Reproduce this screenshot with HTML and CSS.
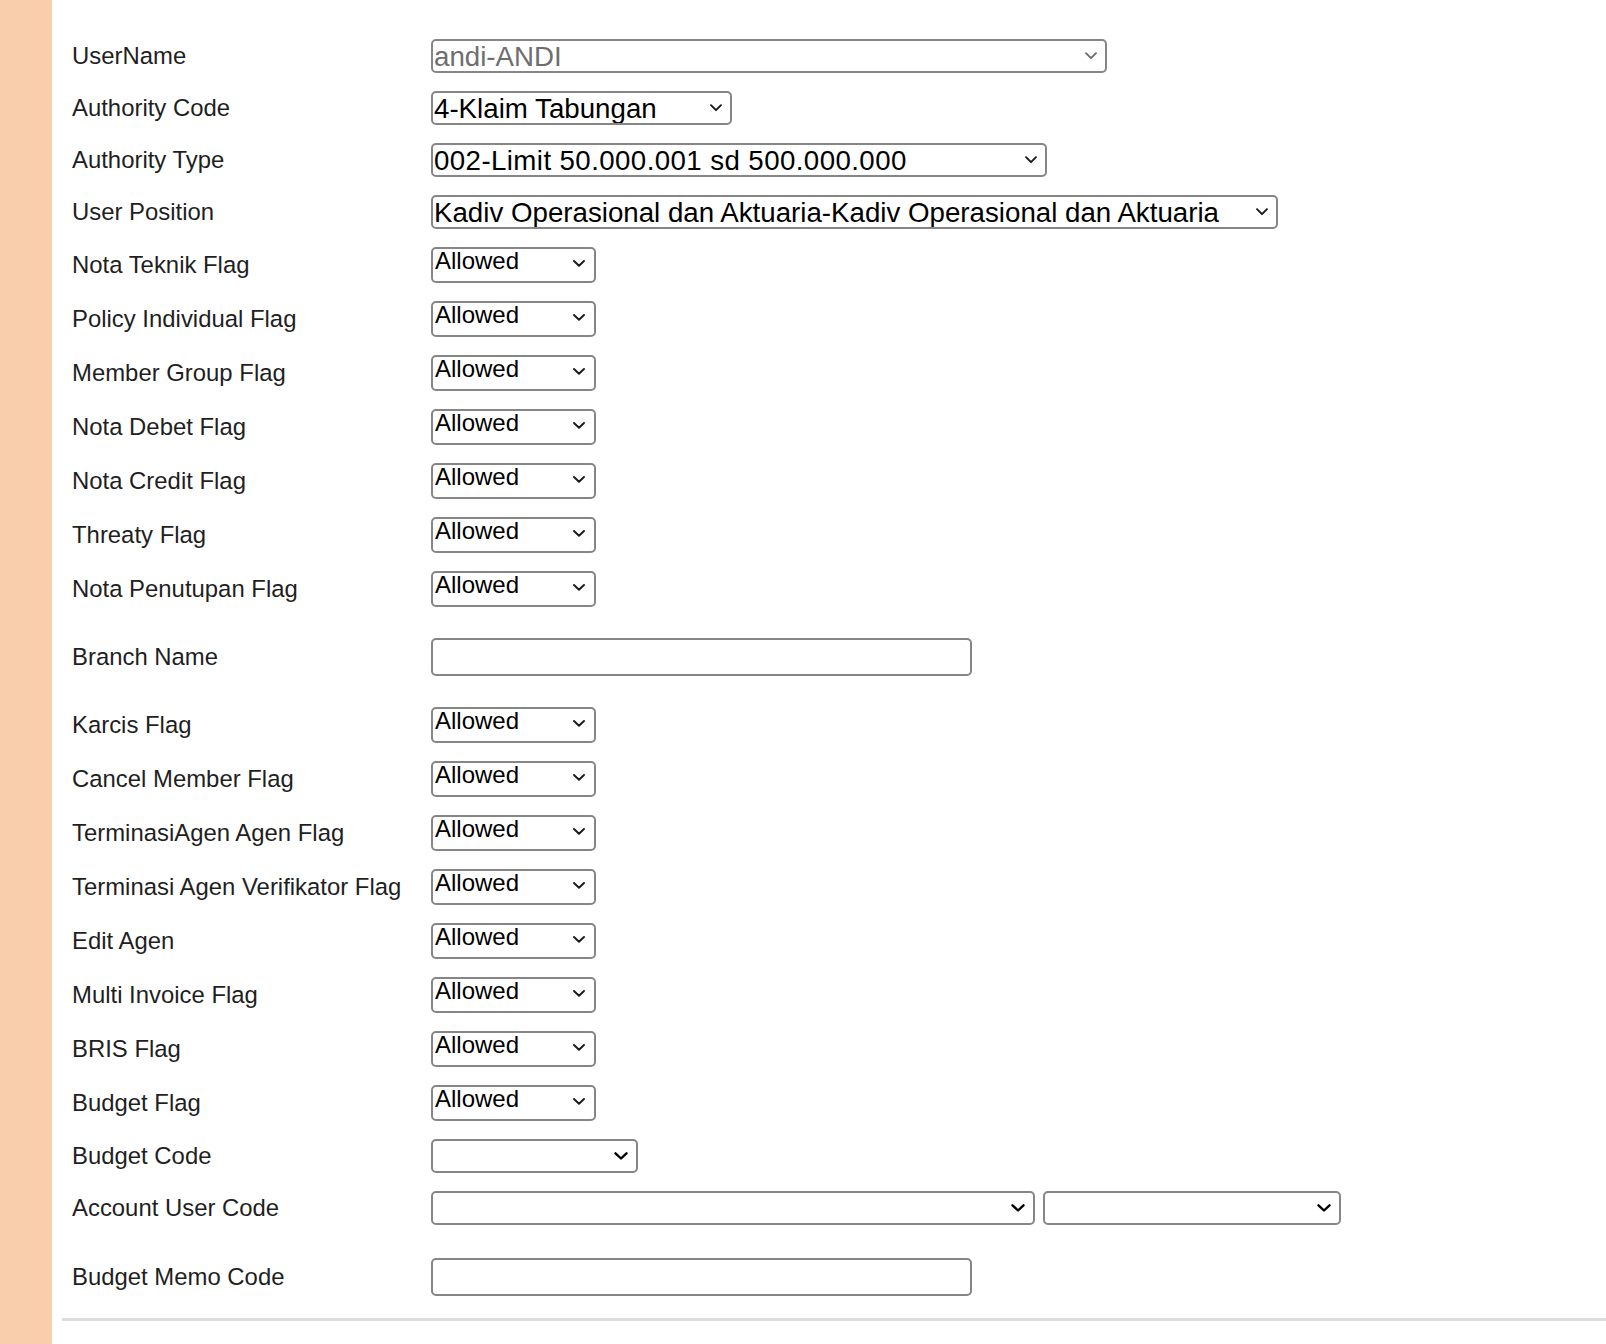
FILE: index.html
```html
<!DOCTYPE html>
<html lang="id">
<head>
<meta charset="utf-8">
<title>User Authority</title>
<link rel="stylesheet" href="styles.css">
</head>
<body>
<div class="page">
  <aside class="side"></aside>
  <main class="main">
    <div class="form">
      <div class="row">
        <div class="label">UserName</div>
        <div class="sel sel-lg w-user disabled"><span class="val">andi-ANDI</span><svg class="chev" width="12" height="8" viewBox="0 0 12 8"><path d="M1 1.2 L6 6.2 L11 1.2"/></svg></div>
      </div>
      <div class="row">
        <div class="label">Authority Code</div>
        <div class="sel sel-lg w-code"><span class="val">4-Klaim Tabungan</span><svg class="chev" width="12" height="8" viewBox="0 0 12 8"><path d="M1 1.2 L6 6.2 L11 1.2"/></svg></div>
      </div>
      <div class="row">
        <div class="label">Authority Type</div>
        <div class="sel sel-lg w-type"><span class="val digits">002-Limit 50.000.001 sd 500.000.000</span><svg class="chev" width="12" height="8" viewBox="0 0 12 8"><path d="M1 1.2 L6 6.2 L11 1.2"/></svg></div>
      </div>
      <div class="row">
        <div class="label">User Position</div>
        <div class="sel sel-lg w-pos"><span class="val">Kadiv Operasional dan Aktuaria-Kadiv Operasional dan Aktuaria</span><svg class="chev" width="12" height="8" viewBox="0 0 12 8"><path d="M1 1.2 L6 6.2 L11 1.2"/></svg></div>
      </div>
      <div class="row">
        <div class="label">Nota Teknik Flag</div>
        <div class="sel sel-flag"><span class="val">Allowed</span><svg class="chev" width="12" height="7" viewBox="0 0 12 7"><path d="M1 1 L6 5.8 L11 1"/></svg></div>
      </div>
      <div class="row">
        <div class="label">Policy Individual Flag</div>
        <div class="sel sel-flag"><span class="val">Allowed</span><svg class="chev" width="12" height="7" viewBox="0 0 12 7"><path d="M1 1 L6 5.8 L11 1"/></svg></div>
      </div>
      <div class="row">
        <div class="label">Member Group Flag</div>
        <div class="sel sel-flag"><span class="val">Allowed</span><svg class="chev" width="12" height="7" viewBox="0 0 12 7"><path d="M1 1 L6 5.8 L11 1"/></svg></div>
      </div>
      <div class="row">
        <div class="label">Nota Debet Flag</div>
        <div class="sel sel-flag"><span class="val">Allowed</span><svg class="chev" width="12" height="7" viewBox="0 0 12 7"><path d="M1 1 L6 5.8 L11 1"/></svg></div>
      </div>
      <div class="row">
        <div class="label">Nota Credit Flag</div>
        <div class="sel sel-flag"><span class="val">Allowed</span><svg class="chev" width="12" height="7" viewBox="0 0 12 7"><path d="M1 1 L6 5.8 L11 1"/></svg></div>
      </div>
      <div class="row">
        <div class="label">Threaty Flag</div>
        <div class="sel sel-flag"><span class="val">Allowed</span><svg class="chev" width="12" height="7" viewBox="0 0 12 7"><path d="M1 1 L6 5.8 L11 1"/></svg></div>
      </div>
      <div class="row">
        <div class="label">Nota Penutupan Flag</div>
        <div class="sel sel-flag"><span class="val">Allowed</span><svg class="chev" width="12" height="7" viewBox="0 0 12 7"><path d="M1 1 L6 5.8 L11 1"/></svg></div>
      </div>
      <div class="row row-sep">
        <div class="label">Branch Name</div>
        <input class="txt" type="text">
      </div>
      <div class="row row-sep">
        <div class="label">Karcis Flag</div>
        <div class="sel sel-flag"><span class="val">Allowed</span><svg class="chev" width="12" height="7" viewBox="0 0 12 7"><path d="M1 1 L6 5.8 L11 1"/></svg></div>
      </div>
      <div class="row">
        <div class="label">Cancel Member Flag</div>
        <div class="sel sel-flag"><span class="val">Allowed</span><svg class="chev" width="12" height="7" viewBox="0 0 12 7"><path d="M1 1 L6 5.8 L11 1"/></svg></div>
      </div>
      <div class="row">
        <div class="label">TerminasiAgen Agen Flag</div>
        <div class="sel sel-flag"><span class="val">Allowed</span><svg class="chev" width="12" height="7" viewBox="0 0 12 7"><path d="M1 1 L6 5.8 L11 1"/></svg></div>
      </div>
      <div class="row">
        <div class="label">Terminasi Agen Verifikator Flag</div>
        <div class="sel sel-flag"><span class="val">Allowed</span><svg class="chev" width="12" height="7" viewBox="0 0 12 7"><path d="M1 1 L6 5.8 L11 1"/></svg></div>
      </div>
      <div class="row">
        <div class="label">Edit Agen</div>
        <div class="sel sel-flag"><span class="val">Allowed</span><svg class="chev" width="12" height="7" viewBox="0 0 12 7"><path d="M1 1 L6 5.8 L11 1"/></svg></div>
      </div>
      <div class="row">
        <div class="label">Multi Invoice Flag</div>
        <div class="sel sel-flag"><span class="val">Allowed</span><svg class="chev" width="12" height="7" viewBox="0 0 12 7"><path d="M1 1 L6 5.8 L11 1"/></svg></div>
      </div>
      <div class="row">
        <div class="label">BRIS Flag</div>
        <div class="sel sel-flag"><span class="val">Allowed</span><svg class="chev" width="12" height="7" viewBox="0 0 12 7"><path d="M1 1 L6 5.8 L11 1"/></svg></div>
      </div>
      <div class="row">
        <div class="label">Budget Flag</div>
        <div class="sel sel-flag"><span class="val">Allowed</span><svg class="chev" width="12" height="7" viewBox="0 0 12 7"><path d="M1 1 L6 5.8 L11 1"/></svg></div>
      </div>
      <div class="row">
        <div class="label">Budget Code</div>
        <div class="sel sel-lg w-bcode"><span class="val"></span><svg class="chev bold" width="14" height="8" viewBox="0 0 14 8"><path d="M1.5 1.3 L7 6.5 L12.5 1.3"/></svg></div>
      </div>
      <div class="row">
        <div class="label">Account User Code</div>
        <div class="pair">
          <div class="sel sel-lg w-acc1"><span class="val"></span><svg class="chev bold" width="14" height="8" viewBox="0 0 14 8"><path d="M1.5 1.3 L7 6.5 L12.5 1.3"/></svg></div>
          <div class="sel sel-lg w-acc2"><span class="val"></span><svg class="chev bold" width="14" height="8" viewBox="0 0 14 8"><path d="M1.5 1.3 L7 6.5 L12.5 1.3"/></svg></div>
        </div>
      </div>
      <div class="row row-sep-lg">
        <div class="label">Budget Memo Code</div>
        <input class="txt" type="text">
      </div>
    </div>
    <div class="rule"></div>
  </main>
</div>
</body>
</html>
```
FILE: styles.css
```css
* { box-sizing: border-box; }

html, body {
  margin: 0;
  padding: 0;
  background: #ffffff;
}

body {
  font-family: "Liberation Sans", Arial, Helvetica, sans-serif;
  color: #1f1f1f;
}

.page {
  display: flex;
  min-height: 1344px;
}

.side {
  width: 52px;
  flex: 0 0 52px;
  background: #f8cead;
}

.main {
  flex: 1;
  padding: 39px 0 0 10px;
}

.form {
  display: flex;
  flex-direction: column;
  gap: 18px;
  padding-left: 10px;
}

.row {
  display: flex;
  align-items: center;
}

.row-sep { margin-top: 13px; }
.row-sep-lg { margin-top: 15px; }

.label {
  width: 359px;
  flex: 0 0 359px;
  font-size: 23.9px;
  line-height: 28px;
  color: #1f1f1f;
  white-space: nowrap;
}

.sel {
  display: flex;
  align-items: center;
  justify-content: space-between;
  border: 2px solid #868686;
  border-radius: 5px;
  background: #fff;
  color: #000;
  overflow: hidden;
}

.sel .val {
  white-space: nowrap;
  padding-left: 1px;
}

.sel-lg {
  height: 34px;
  font-size: 27.7px;
  line-height: 30px;
  padding-top: 2px;
  padding-right: 8px;
}

.sel-lg .chev { margin-top: -2px; }

.val.digits { letter-spacing: 0.4px; }

.sel-flag {
  width: 165px;
  height: 36px;
  align-items: flex-start;
  font-size: 24px;
  line-height: 24px;
  padding-right: 9px;
}

.sel-flag .val { padding-left: 2px; }

.sel-flag .chev {
  align-self: center;
  margin-bottom: 3px;
}

.chev {
  flex: 0 0 auto;
  fill: none;
  stroke: #1a1a1a;
  stroke-width: 1.9;
  stroke-linecap: round;
  stroke-linejoin: round;
}

.chev.bold {
  stroke: #000;
  stroke-width: 2.4;
}

.disabled { color: #6e6e6e; }
.disabled .chev { stroke: #6e6e6e; }

.w-user { width: 676px; }
.w-code { width: 301px; }
.w-type { width: 616px; }
.w-pos { width: 847px; }
.w-bcode { width: 207px; }
.w-acc1 { width: 604px; }
.w-acc2 { width: 298px; }

.pair {
  display: flex;
  gap: 8px;
}

.txt {
  width: 541px;
  height: 38px;
  border: 2px solid #868686;
  border-radius: 5px;
  background: #fff;
  padding: 0 4px;
  font: inherit;
  font-size: 22px;
  outline: none;
}

.rule {
  margin-top: 22px;
  height: 3px;
  background: #dcdcdc;
}
```
